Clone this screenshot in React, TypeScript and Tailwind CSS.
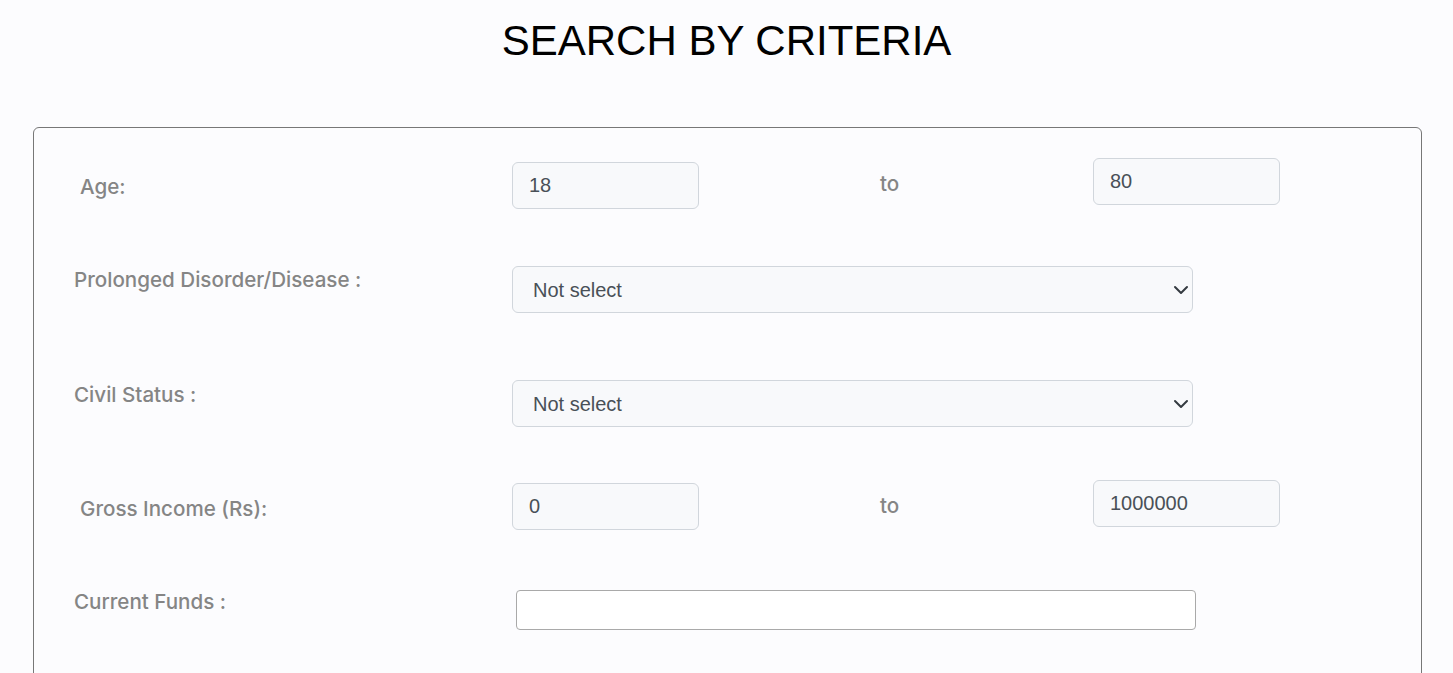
const labelCls = "text-[20.6px] leading-[28px] font-medium text-[#858585] font-['Inter',sans-serif]";
const inputCls =
    "h-[47px] w-[187px] rounded-[6px] border border-[#d1d6dc] bg-[#f8f9fb] px-4 text-[20px] text-[#495057] outline-none font-['Liberation_Sans',Arial,sans-serif]";

const Chevron = () => (
    <svg className="pointer-events-none absolute top-1/2 right-[4px] h-4 w-4 -translate-y-1/2" viewBox="0 0 16 16" fill="none">
        <path d="M2 5l6 6 6-6" stroke="#343a40" strokeWidth="2" strokeLinecap="round" strokeLinejoin="round" />
    </svg>
);

const SelectBox = () => (
    <div className="relative w-[681px]">
        <select
            defaultValue=""
            className="h-[47px] w-full appearance-none rounded-[6px] border border-[#d1d6dc] bg-[#f8f9fb] pr-10 pl-[20px] text-[20px] text-[#495057] outline-none font-['Liberation_Sans',Arial,sans-serif]"
        >
            <option value="">Not select</option>
        </select>
        <Chevron />
    </div>
);

const RangeRow = ({
    label,
    from,
    to,
    className,
    offset,
}: {
    label: string;
    from: string;
    to: string;
    className: string;
    offset: string;
}) => (
    <div className={`flex items-start ${className}`}>
        <div className="w-[438px] pt-[15px] pl-[6px]">
            <span className={labelCls}>{label}</span>
        </div>
        <input className={`${inputCls} ${offset}`} defaultValue={from} />
        <div className="w-[394px] pt-[12px] pl-[181px]">
            <span className={labelCls}>to</span>
        </div>
        <input className={inputCls} defaultValue={to} />
    </div>
);

export default function App() {
    return (
        <div className="min-h-screen bg-[#fcfcfe] pt-[20px]">
            {/* titre */}
            <h1 className="text-center text-[42px] leading-[42px] font-normal text-black font-['Liberation_Sans',Arial,sans-serif]">
                SEARCH BY CRITERIA
            </h1>

            {/* carte des critères */}
            <div className="mt-[65px] mr-[31px] ml-[33px] rounded-[6px] border border-[#777777] pt-[30px] pb-[80px] pl-[40px]">
                <RangeRow label="Age:" from="18" to="80" className="" offset="mt-[4px]" />

                <div className="mt-[57px] flex items-start">
                    <div className="w-[438px]">
                        <span className={labelCls}>Prolonged Disorder/Disease :</span>
                    </div>
                    <SelectBox />
                </div>

                <div className="mt-[67px] flex items-start">
                    <div className="w-[438px] pt-[1px]">
                        <span className={labelCls}>Civil Status :</span>
                    </div>
                    <SelectBox />
                </div>

                <RangeRow label="Gross Income (Rs):" from="0" to="1000000" className="mt-[53px]" offset="mt-[3px]" />

                <div className="mt-[58px] flex items-start">
                    <div className="w-[438px]">
                        <span className={labelCls}>Current Funds :</span>
                    </div>
                    <input className="mt-[2px] ml-[4px] h-[40px] w-[680px] rounded-[4px] border border-[#a9a9a9] bg-white px-3 outline-none" />
                </div>
            </div>
        </div>
    );
}
